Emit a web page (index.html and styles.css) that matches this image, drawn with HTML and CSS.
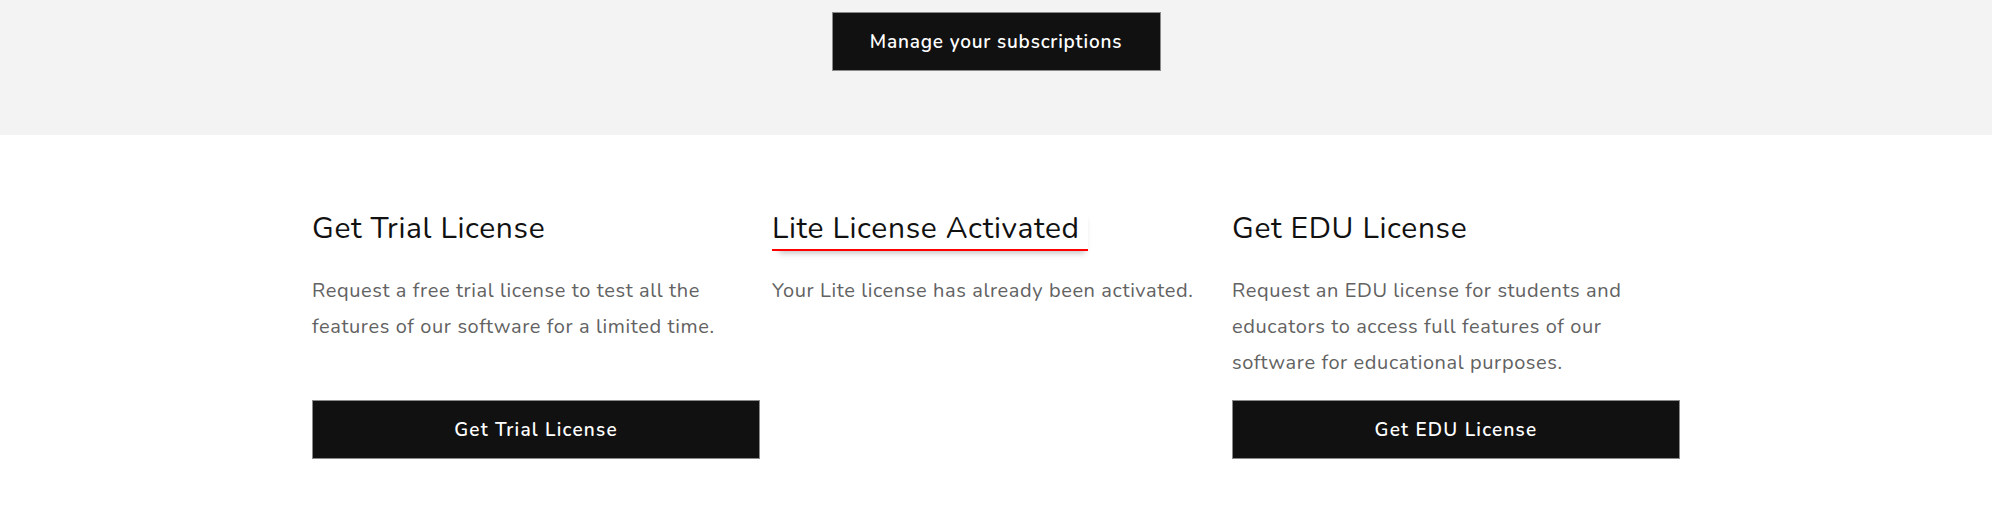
FILE: index.html
```html
<!DOCTYPE html>
<html lang="en">
<head>
    <meta charset="UTF-8">
    <meta name="viewport" content="width=device-width, initial-scale=1.0">
    <title>Licenses</title>
    <link rel="stylesheet" href="styles.css">
</head>
<body>

<section class="top-band">
    <a class="btn btn-manage" href="#">Manage your subscriptions</a>
</section>

<section class="licenses">
    <div class="license-grid">
        <div class="license-card">
            <h3 class="license-title">Get Trial License</h3>
            <p class="license-text">Request a free trial license to test all the features of our software for a limited time.</p>
            <a class="btn btn-block" href="#">Get Trial License</a>
        </div>
        <div class="license-card">
            <h3 class="license-title"><span class="activated">Lite License Activated</span></h3>
            <p class="license-text">Your Lite license has already been activated.</p>
        </div>
        <div class="license-card">
            <h3 class="license-title">Get EDU License</h3>
            <p class="license-text">Request an EDU license for students and educators to access full features of our software for educational purposes.</p>
            <a class="btn btn-block" href="#">Get EDU License</a>
        </div>
    </div>
</section>

</body>
</html>
```

FILE: styles.css
```css
body {
    font-family: Nunito, Lato, "Open Sans", sans-serif;
    background-color: #fff;
    color: #111;
    margin: 0;
    padding: 0 8px 0 0;
}
.top-band {
    background-color: #f3f3f3;
    height: 135px;
    padding-top: 12px;
    box-sizing: border-box;
    display: flex;
    justify-content: center;
}
.btn {
    display: flex;
    align-items: center;
    justify-content: center;
    box-sizing: border-box;
    height: 59px;
    background-color: #111;
    color: #fff;
    border: 1px solid #8a8a8a;
    text-decoration: none;
    font-size: 19px;
    font-weight: 600;
    letter-spacing: 0.8px;
}
.btn-manage {
    width: 329px;
}
.btn-block {
    width: 100%;
    margin-top: auto;
    letter-spacing: 1.2px;
}
.licenses {
    padding: 76px 0 40px;
}
.license-grid {
    width: 1368px;
    margin: 0 auto;
    display: grid;
    grid-template-columns: repeat(3, 1fr);
    gap: 12px;
}
.license-card {
    display: flex;
    flex-direction: column;
    align-items: flex-start;
}
.license-title {
    font-size: 30px;
    font-weight: 400;
    line-height: 36px;
    margin: 0 0 26px;
    letter-spacing: 0.65px;
}
.activated {
    padding-right: 8px;
    border-bottom: 2px solid #f00;
    box-shadow: 2px 7px 6px -5px rgba(0, 0, 0, 0.25);
}
.license-text {
    font-size: 20px;
    line-height: 36px;
    color: #626262;
    margin: 0 0 19px;
    padding-right: 20px;
    letter-spacing: 0.6px;
}
```
